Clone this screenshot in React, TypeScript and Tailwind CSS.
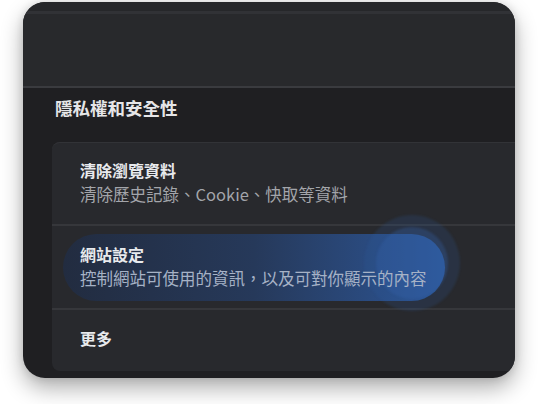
export default function App() {
  return (
    <div className="w-[542px] h-[404px] bg-white pt-[2px] pl-[23px] font-['Noto_Sans_CJK_TC','Noto_Sans',sans-serif]">
      <div className="w-[492px] h-[376px] rounded-[22px] overflow-hidden flex flex-col bg-[#1f1f22] shadow-[0_10px_22px_rgba(0,0,0,0.32),0_0_8px_rgba(0,0,0,0.12)]">
        {/* Toolbar */}
        <div className="h-[9px] bg-[#26272a]" />
        <div className="h-[3px] bg-[#313236]" />
        <div className="h-[72px] bg-[#28292c]" />
        <div className="h-[2px] bg-[#3a3b3f]" />

        {/* Body */}
        <div className="flex-1 flex flex-col">
          <div className="pt-[8px] pl-[32px] text-[17.5px] leading-[24px] text-[#e6e6e8] font-semibold">
            隱私權和安全性
          </div>

          <div className="mt-[22px] ml-[29px] bg-[#28292d] rounded-l-[8px] flex flex-col">
            <div className="h-[82px] flex flex-col justify-center pl-[28px] pb-[3px] border-t border-[#323337] rounded-tl-[8px]">
              <div className="text-[16px] leading-[24px] font-bold text-[#e8eaed]">清除瀏覽資料</div>
              <div className="text-[16.5px] leading-[24px] text-[#a3a5aa]">清除歷史記錄、Cookie、快取等資料</div>
            </div>
            <div className="h-[2px] bg-[#36373b]" />

            <div className="relative h-[82px] flex flex-col justify-center pl-[28px] pb-[2px]">
              {/* hover highlight */}
              <div className="absolute left-[11px] top-[8px] w-[382px] h-[67px] rounded-full bg-gradient-to-r from-[#222c40] via-[#26395a] to-[#2c5698]" />
              <div className="absolute left-[312px] top-[-11px] w-[96px] h-[96px] rounded-full bg-[#2f5a9c]/20 blur-[1px]" />
              <div className="absolute left-[324px] top-[1px] w-[72px] h-[72px] rounded-full bg-[#3465ad]/30 blur-[1px]" />
              <div className="relative text-[16px] leading-[24px] font-bold text-[#e8eaed]">網站設定</div>
              <div className="relative text-[16.5px] leading-[24px] text-[#a6b2c6]">控制網站可使用的資訊，以及可對你顯示的內容</div>
            </div>
            <div className="h-[2px] bg-[#36373b]" />

            <div className="h-[61px] flex items-center pl-[28px] pb-[5px] rounded-bl-[8px]">
              <div className="text-[16px] leading-[24px] font-bold text-[#e8eaed]">更多</div>
            </div>
          </div>
        </div>
      </div>
    </div>
  );
}
